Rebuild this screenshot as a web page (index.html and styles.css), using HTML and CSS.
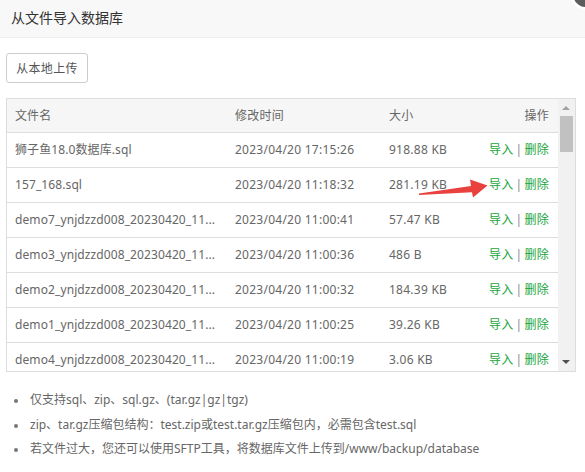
FILE: index.html
```html
<!DOCTYPE html>
<html lang="zh-CN">
<head>
<meta charset="utf-8">
<title>从文件导入数据库</title>
<link rel="stylesheet" href="styles.css">
</head>
<body>
<div class="dialog">
  <div class="title">从文件导入数据库</div>
  <span class="close"></span>
  <div class="content">
    <button class="btn">从本地上传</button>
    <div class="table-box">
      <div class="table">
        <div class="row head">
          <div class="c1">文件名</div><div class="c2">修改时间</div><div class="c3">大小</div><div class="c4">操作</div>
        </div>
        <div class="row">
          <div class="c1">狮子鱼18.0数据库.sql</div><div class="c2">2023/04/20 17:15:26</div><div class="c3">918.88 KB</div><div class="c4"><a>导入</a><span class="sep">|</span><a>删除</a></div>
        </div>
        <div class="row">
          <div class="c1">157_168.sql</div><div class="c2">2023/04/20 11:18:32</div><div class="c3">281.19 KB</div><div class="c4"><a>导入</a><span class="sep">|</span><a>删除</a></div>
        </div>
        <div class="row">
          <div class="c1">demo7_ynjdzzd008_20230420_11...</div><div class="c2">2023/04/20 11:00:41</div><div class="c3">57.47 KB</div><div class="c4"><a>导入</a><span class="sep">|</span><a>删除</a></div>
        </div>
        <div class="row">
          <div class="c1">demo3_ynjdzzd008_20230420_11...</div><div class="c2">2023/04/20 11:00:36</div><div class="c3">486 B</div><div class="c4"><a>导入</a><span class="sep">|</span><a>删除</a></div>
        </div>
        <div class="row">
          <div class="c1">demo2_ynjdzzd008_20230420_11...</div><div class="c2">2023/04/20 11:00:32</div><div class="c3">184.39 KB</div><div class="c4"><a>导入</a><span class="sep">|</span><a>删除</a></div>
        </div>
        <div class="row">
          <div class="c1">demo1_ynjdzzd008_20230420_11...</div><div class="c2">2023/04/20 11:00:25</div><div class="c3">39.26 KB</div><div class="c4"><a>导入</a><span class="sep">|</span><a>删除</a></div>
        </div>
        <div class="row">
          <div class="c1">demo4_ynjdzzd008_20230420_11...</div><div class="c2">2023/04/20 11:00:19</div><div class="c3">3.06 KB</div><div class="c4"><a>导入</a><span class="sep">|</span><a>删除</a></div>
        </div>
      </div>
      <div class="scrollbar">
        <span class="arr up"></span>
        <span class="thumb"></span>
        <span class="arr down"></span>
      </div>
    </div>
    <ul class="tips">
      <li>仅支持sql、zip、sql.gz、(tar.gz|gz|tgz)</li>
      <li>zip、tar.gz压缩包结构：test.zip或test.tar.gz压缩包内，必需包含test.sql</li>
      <li>若文件过大，您还可以使用SFTP工具，将数据库文件上传到/www/backup/database</li>
    </ul>
  </div>
  <svg class="arrow" width="80" height="30" viewBox="0 0 80 30">
    <polygon points="4,21.6 56,14 55,7.5 72.5,13.5 58,25.5 57,20.3 4,22.9" fill="#e8413e"/>
  </svg>
</div>
</body>
</html>
```
FILE: styles.css
```css
html, body {
  margin: 0;
  padding: 0;
  background: #fff;
}
body {
  width: 585px;
  height: 472px;
  overflow: hidden;
  font-family: "Noto Sans", "Noto Sans CJK SC", sans-serif;
  font-size: 12px;
  color: #666;
}
.dialog {
  position: relative;
  width: 585px;
  height: 472px;
  overflow: hidden;
}
.title {
  height: 37px;
  line-height: 35px;
  padding-left: 11px;
  background: #f8f8f8;
  border-bottom: 1px solid #eee;
  font-size: 14px;
  color: #333;
}
.close {
  position: absolute;
  right: -17px;
  top: -22px;
  width: 26px;
  height: 26px;
  border-radius: 50%;
  background: #5d5d5d;
  border: 3px solid #fff;
}
.content {
  padding: 15px 9px 0 6px;
}
.btn {
  display: block;
  height: 30px;
  width: 82px;
  padding: 0;
  border: 1px solid #ccc;
  border-radius: 3px;
  background: #fff;
  font-family: inherit;
  font-size: 12px;
  color: #555;
  letter-spacing: 0.3px;
}
.table-box {
  margin-top: 15px;
  height: 272px;
  border: 1px solid #ddd;
  display: flex;
  overflow: hidden;
}
.table {
  flex: 1;
  min-width: 0;
}
.row {
  display: grid;
  grid-template-columns: 220px 154px 1fr 110px;
  height: 34px;
  line-height: 34px;
  border-bottom: 1px solid #ddd;
  letter-spacing: 0.25px;
}
.row.head {
  height: 33px;
  line-height: 33px;
  background: #f6f6f6;
}
.row > div {
  padding-left: 8px;
  white-space: nowrap;
  overflow: hidden;
  text-overflow: ellipsis;
}
.row > .c1 {
  padding-right: 4px;
  letter-spacing: 0.1px;
}
.row > .c4 {
  text-align: right;
  padding-right: 9px;
  padding-left: 0;
}
.c4 a {
  color: #20a53a;
}
.c4 .sep {
  color: #888;
  margin: 0 2px;
}
.scrollbar {
  width: 17px;
  flex: none;
  background: #f1f1f1;
  position: relative;
}
.thumb {
  position: absolute;
  left: 2px;
  top: 17px;
  width: 13px;
  height: 36px;
  background: #c1c1c1;
}
.arr {
  position: absolute;
  left: 4px;
  width: 0;
  height: 0;
  border-left: 4px solid transparent;
  border-right: 4px solid transparent;
}
.arr.up {
  top: 7px;
  border-bottom: 4px solid #a3a3a3;
}
.arr.down {
  bottom: 7px;
  border-top: 4px solid #505050;
}
.tips {
  margin: 0;
  padding: 16px 0 0 24px;
  list-style: none;
  color: #666;
  font-size: 12px;
}
.tips li {
  position: relative;
  height: 24.5px;
  line-height: 24.5px;
}
.tips li::before {
  content: "";
  position: absolute;
  left: -16px;
  top: 11px;
  width: 4px;
  height: 4px;
  border-radius: 50%;
  background: #777;
}
.arrow {
  position: absolute;
  left: 415px;
  top: 172px;
}
```
